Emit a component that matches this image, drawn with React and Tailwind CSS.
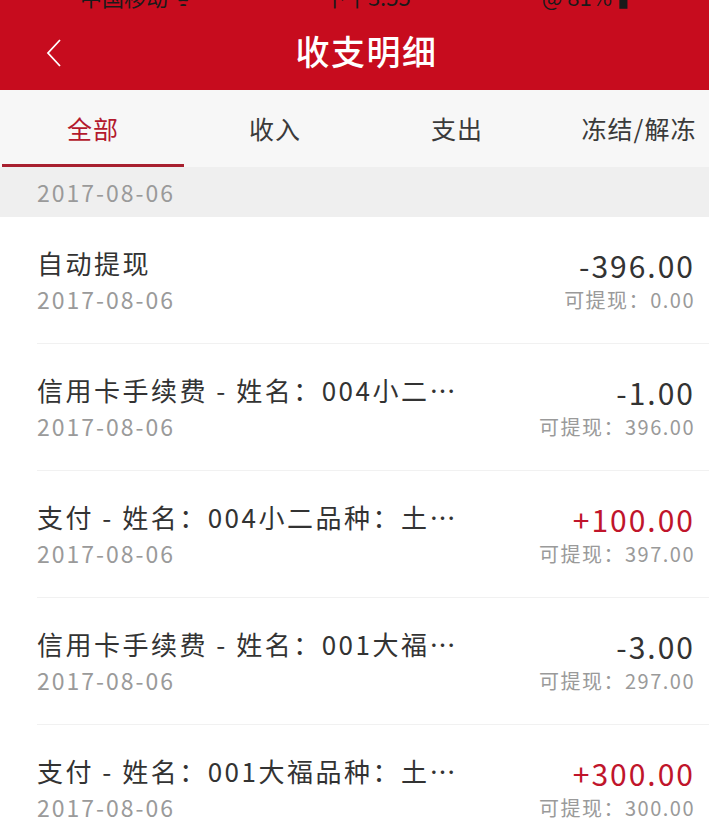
import React from "react";

const rows = [
  { title: "自动提现", amount: "-396.00", avail: "0.00", income: false },
  { title: "信用卡手续费 - 姓名：004小二品种：土豆", amount: "-1.00", avail: "396.00", income: false },
  { title: "支付 - 姓名：004小二品种：土豆（一级）", amount: "+100.00", avail: "397.00", income: true },
  { title: "信用卡手续费 - 姓名：001大福品种：土豆", amount: "-3.00", avail: "297.00", income: false },
  { title: "支付 - 姓名：001大福品种：土豆（一级）", amount: "+300.00", avail: "300.00", income: true },
];

const tabs = ["全部", "收入", "支出", "冻结/解冻"];

const font = { fontFamily: '"Noto Sans CJK SC", "Noto Sans", Roboto, sans-serif' };

function Row({ row }) {
  return (
    <div className="pl-[37px]">
      <div className="flex h-[127px] items-center border-b border-[#f1f1f1] pr-[14px]">
        <div className="min-w-0 flex-1">
          <div className="w-[425px] truncate text-[26px] leading-[36px] tracking-[2.5px] text-[#333]">{row.title}</div>
          <div className="mt-[2px] text-[23px] leading-[32px] tracking-[2px] text-[#9a9a9a]">2017-08-06</div>
        </div>
        <div className="flex flex-col items-end">
          <div className={`text-[30px] leading-[38px] tracking-[2px] ${row.income ? "text-[#c0152b]" : "text-[#333]"}`}>
            {row.amount}
          </div>
          <div className="mt-[1px] text-[20px] leading-[30px] tracking-[1.5px] text-[#9a9a9a]">可提现：{row.avail}</div>
        </div>
      </div>
    </div>
  );
}

export default function App() {
  return (
    <div className="h-[831px] w-[709px] overflow-hidden bg-white" style={font}>
      <div className="bg-[#c70c1e]">
        <div className="h-[10px] overflow-hidden">
          <div className="mt-[-17px] flex items-center justify-between px-[80px] text-[22px] leading-[26px] text-[#1a1a1a]">
            <span>中国移动 ᯤ</span>
            <span>下午3:55</span>
            <span>@ 81% ▮</span>
          </div>
        </div>
        <div className="relative flex h-[80px] items-center justify-center pl-[24px]">
          <svg className="absolute left-[44px] top-[28px]" width="20" height="30" viewBox="0 0 20 30" fill="none">
            <path d="M16 2 L4 15 L16 28" stroke="white" strokeWidth="1.8" />
          </svg>
          <div className="text-[34px] font-medium tracking-[1.5px] text-white">收支明细</div>
        </div>
      </div>

      <div className="flex h-[77px] overflow-hidden bg-[#f7f7f7] pl-[2px]">
        {tabs.map((t, i) => (
          <div key={t} className="relative flex w-[182px] shrink-0 items-center justify-center">
            <span className={`text-[25px] tracking-[1px] ${i === 0 ? "text-[#b3192d]" : "text-[#3a3a3a]"}`}>{t}</span>
            {i === 0 && <div className="absolute bottom-0 left-0 right-0 h-[3px] bg-[#a8202f]" />}
          </div>
        ))}
      </div>

      <div className="flex h-[50px] items-center bg-[#efefef] pl-[37px] text-[23px] tracking-[2px] text-[#9a9a9a]">2017-08-06</div>

      {rows.map((r, i) => (
        <Row key={i} row={r} />
      ))}
    </div>
  );
}
